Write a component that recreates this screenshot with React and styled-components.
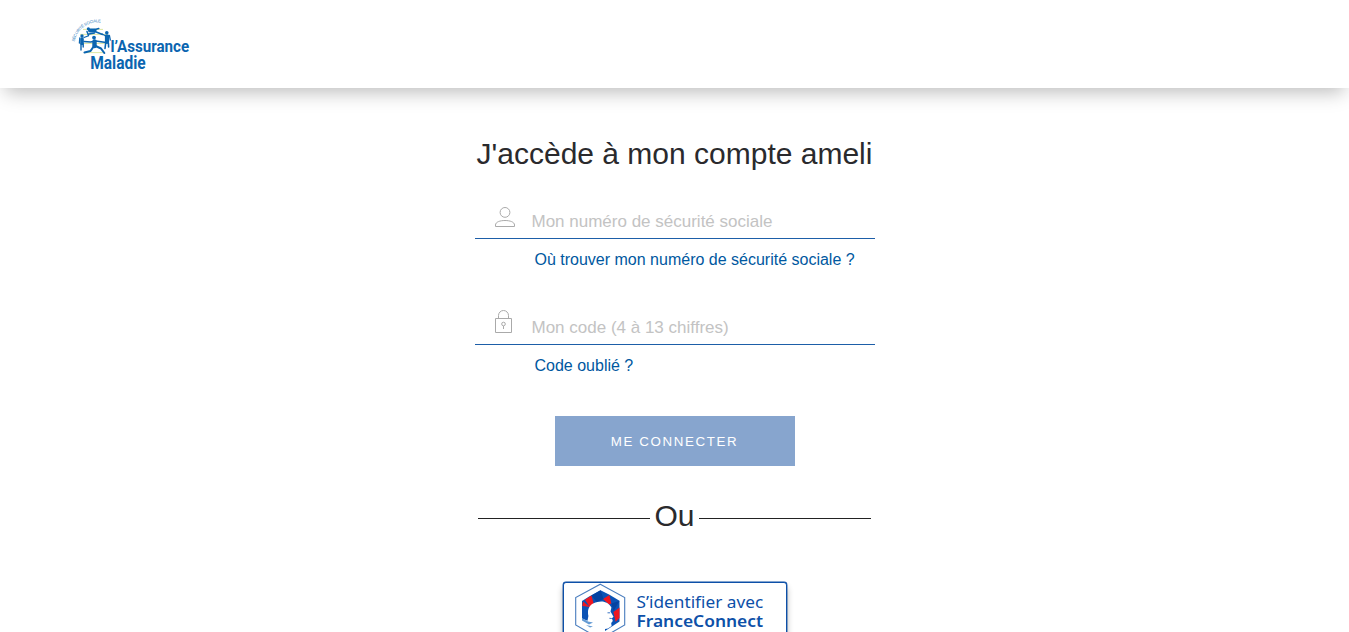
import React from "react";
import styled, { createGlobalStyle } from "styled-components";

const GlobalStyle = createGlobalStyle`
  *, *::before, *::after { box-sizing: border-box; }
  body {
    margin: 0;
    background: #fff;
    color: #2a2a2d;
    font-family: "Liberation Sans", Arial, sans-serif;
  }
`;

const Page = styled.div`
  height: 632px;
  overflow: hidden;
  display: flex;
  flex-direction: column;
`;

const Header = styled.header`
  flex: none;
  height: 88px;
  padding: 16px 70px;
  background: #fff;
  box-shadow: 0 9px 18px -5px rgba(0, 0, 0, 0.27);
`;

const Main = styled.main`
  width: 400px;
  margin: 0 auto;
  padding-top: 45px;
  display: flex;
  flex-direction: column;
  align-items: center;
  flex: none;
`;

const Title = styled.h1`
  margin: 0;
  height: 42px;
  line-height: 42px;
  font-size: 30px;
  font-weight: 400;
  white-space: nowrap;
`;

const Field = styled.label`
  display: flex;
  width: 400px;
  height: 36px;
  margin-top: ${(p) => p.$top}px;
  padding-left: 20px;
  border-bottom: 1px solid #1d5ea8;
`;

const IconSlot = styled.span`
  flex: none;
  width: 37px;
  padding-top: ${(p) => p.$drop}px;
  svg { display: block; }
`;

const Input = styled.input`
  flex: 1;
  min-width: 0;
  height: 35px;
  border: 0;
  padding: 2px 0 0;
  background: transparent;
  outline: none;
  font: 17px "Liberation Sans", Arial, sans-serif;
  &::placeholder { color: #c3c3c3; opacity: 1; }
`;

const HelpLink = styled.a`
  align-self: flex-start;
  margin: 11px 0 0 60px;
  height: 20px;
  line-height: 20px;
  font-size: 16px;
  color: #0058a0;
  text-decoration: none;
  white-space: nowrap;
`;

const Submit = styled.button`
  width: 240px;
  height: 50px;
  margin-top: 40px;
  padding: 0;
  border: 0;
  background: #87a5ce;
  color: #fff;
  font: 13.33px "Liberation Sans", Arial, sans-serif;
  letter-spacing: 1.6px;
`;

const Divider = styled.div`
  display: flex;
  align-items: center;
  width: 393px;
  height: 40px;
  margin-top: 30px;
  gap: 4.5px;
  font-size: 30px;
  line-height: 40px;
  &::before, &::after {
    content: "";
    flex: 1;
    height: 1px;
    margin-top: 5px;
    background: #222;
  }
`;

const FranceConnect = styled.a`
  display: flex;
  align-self: flex-start;
  width: 224px;
  height: 58px;
  margin: 46px 0 0 88px;
  border: 1px solid #0d50a8;
  border-radius: 3px;
  box-shadow: 0 5px 6px rgba(0, 0, 0, 0.3), 0 0 0 0.4px #0d50a8;
  background: #fff;
  svg { display: block; }
`;

function AssuranceLogo() {
  return (
    <svg width="126" height="58" viewBox="70 16 126 58" overflow="visible" role="img" aria-label="l'Assurance Maladie">
      <path id="arc" d="M74.6 41.8A23.5 23.5 0 0 1 102 22.6" fill="none" />
      <text fontFamily="Liberation Sans" fontSize="4" fill="#2b79b9">
        <textPath href="#arc" textLength="35.5">SÉCURITÉ SOCIALE</textPath>
      </text>
      <g stroke="#d3e08b" strokeWidth="0.8">
        <path d="M83 29.4H103M80 34.4H108M80 43.4H107M86 52.6H104" />
      </g>
      <g fill="none" stroke="#0b65b0" strokeLinecap="round" strokeLinejoin="round">
        <path d="M84 41.5L90.5 42 96 41 106 42.5" strokeWidth="1.6" />
        <path d="M94.5 41.5L94.5 46" strokeWidth="4.4" />
        <path d="M94 46L90.5 51 84.5 52.5M95.5 46L101 48.5 104.3 53" strokeWidth="2.1" />
        <path d="M82 39V43.5" strokeWidth="3.6" />
        <path d="M81 44V50M83.2 44V47" strokeWidth="1.4" />
        <path d="M79.8 38L79.4 43M84 37.5L88 36" strokeWidth="1.3" />
        <path d="M107 36.5V42" strokeWidth="4.2" />
        <path d="M105.7 43L105 48.5M108.4 43L108.6 47" strokeWidth="1.6" />
        <path d="M102 34L105 35.5 109.4 35.5 110.3 40" strokeWidth="1.3" />
        <path d="M90 30.6L94.5 30.6" strokeWidth="4" />
        <path d="M87 31.5L88.5 35.5M95 29.5L98.8 28.5M95 31.5L102.5 34.5M89 34L94.5 33" strokeWidth="1.5" />
      </g>
      <g fill="#0b65b0">
        <circle cx="94" cy="37.6" r="1.9" />
        <circle cx="82" cy="36" r="1.7" />
        <circle cx="106.8" cy="32.8" r="1.8" />
        <circle cx="88.4" cy="28.8" r="1.6" />
      </g>
      <g fontFamily="Roboto, sans-serif" fontWeight="700" fill="#0b65b0">
        <text x="110.4" y="52.3" fontSize="16.8" textLength="78.8" lengthAdjust="spacingAndGlyphs">l’Assurance</text>
        <text x="90.2" y="69.2" fontSize="18.2" textLength="55.5" lengthAdjust="spacingAndGlyphs">Maladie</text>
      </g>
    </svg>
  );
}

function PersonIcon() {
  return (
    <svg width="21" height="21" viewBox="0 0 21 21" fill="none" stroke="#aaa">
      <circle cx="10" cy="5.4" r="4.9" />
      <path d="M.5 19.5V18C.5 15 5 13.5 10 13.5S19.5 15 19.5 18V19.5Z" />
    </svg>
  );
}

function LockIcon() {
  return (
    <svg width="18" height="24" viewBox="0 0 18 24" fill="none" stroke="#aaa">
      <path d="M.5 8.5H16.5V22.5H.5ZM3.5 8.5V5.5A5 5 0 0 1 13.5 5.5V8.5" />
      <circle cx="8.5" cy="14" r="1.8" />
      <path d="M8.5 16V19" />
    </svg>
  );
}

function FranceConnectArt() {
  return (
    <svg width="222" height="55" viewBox="564 583 222 55" role="img" aria-label="S'identifier avec FranceConnect">
      <path d="M600.3 584.2L624.7 597.6V625L600.3 639L575.7 625V597.6Z" fill="#fff" stroke="#497dbe" strokeWidth="1.1" />
      <path d="M600.5 590.2L609.5 594.8 619.5 600.8V621.5L600.5 634 582 621.5V601L590 596Z" fill="#0b53b5" />
      <path d="M591.5 595.5L593.5 603 590 607.5 585 599.8ZM583 601.5L590 607 582.3 606ZM603 599L609.4 595 611.4 603.5 609 604.5ZM613.4 612L619.5 607.5V618L615.6 621.8Z" fill="#ef1720" />
      <path d="M600.5 590.2L603.5 599 596.5 602 591.5 595.5ZM611.4 603.5L619.5 601 613.5 611Z" fill="#0642a0" />
      <path d="M588.4 616C586.5 608 591 603 597.5 602 603 600.2 609 602.5 611.4 607.5L610.5 611.5 613.5 616.8 611.9 618.3 612.8 621 611.2 623 611.6 626 608 628.5 605 629V634H591L582 622.5V618.5L587.5 620.8Z" fill="#fff" />
      <path d="M582 618L588 621.5 593 622.4 589 624.5 582 620.6ZM586 625L593 626.4 590 627.5Z" fill="#649bd4" />
      <path d="M607.5 612.8H610.2M609.4 618.3L611.8 618.5" stroke="#0b53b5" strokeWidth="0.8" />
      <g fontFamily='"Noto Sans", "Open Sans", sans-serif' fill="#0d50a8">
        <text x="636.6" y="608.4" fontSize="16" textLength="126.6" lengthAdjust="spacingAndGlyphs">S’identifier avec</text>
        <text x="636.4" y="626.6" fontSize="16" fontWeight="600" textLength="126.6" lengthAdjust="spacingAndGlyphs">FranceConnect</text>
      </g>
    </svg>
  );
}

export default function App() {
  return (
    <Page>
      <GlobalStyle />
      <Header>
        <AssuranceLogo />
      </Header>
      <Main>
        <Title>J'accède à mon compte ameli</Title>
        <Field $top={28}>
          <IconSlot $drop={4}><PersonIcon /></IconSlot>
          <Input placeholder="Mon numéro de sécurité sociale" />
        </Field>
        <HelpLink>Où trouver mon numéro de sécurité sociale ?</HelpLink>
        <Field $top={39}>
          <IconSlot $drop={1}><LockIcon /></IconSlot>
          <Input placeholder="Mon code (4 à 13 chiffres)" />
        </Field>
        <HelpLink>Code oublié ?</HelpLink>
        <Submit>ME CONNECTER</Submit>
        <Divider>Ou</Divider>
        <FranceConnect>
          <FranceConnectArt />
        </FranceConnect>
      </Main>
    </Page>
  );
}
